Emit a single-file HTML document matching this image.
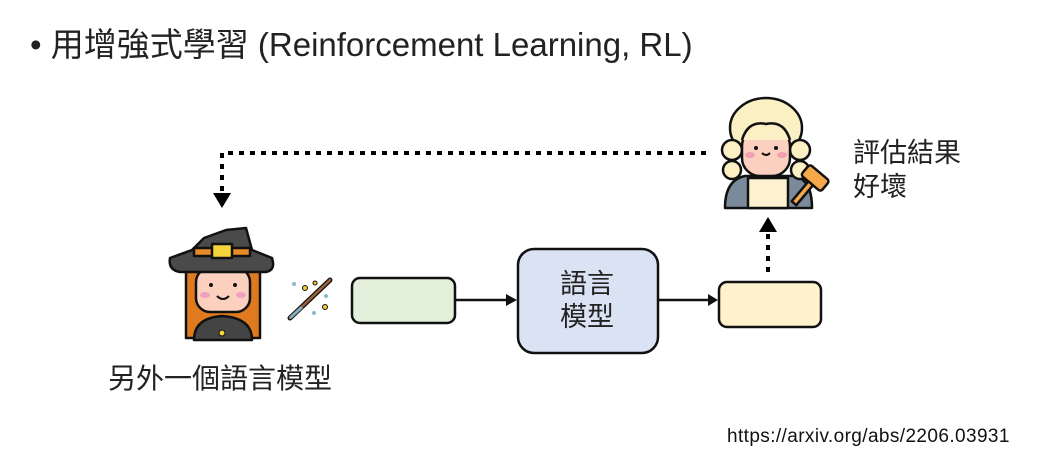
<!DOCTYPE html>
<html><head><meta charset="utf-8"><style>
body{margin:0;width:1053px;height:472px;background:#fff;position:relative;overflow:hidden;font-family:"Liberation Sans","Noto Sans CJK TC",sans-serif;color:#222}
.a{position:absolute;white-space:nowrap}
</style></head><body>
<div class="a" style="left:30px;top:25px;font-size:33px;line-height:40px;">• 用增強式學習 (Reinforcement Learning, RL)</div>
<svg class="a" style="left:0;top:0" width="1053" height="472">
<path d="M706 153 H222 V195" stroke="#000" stroke-width="4" stroke-dasharray="5 6" fill="none"/>
<polygon points="213,193 231,193 222,208" fill="#000"/>
<path d="M768 272 V232" stroke="#000" stroke-width="4" stroke-dasharray="5 6" fill="none"/>
<polygon points="759,232 777,232 768,217" fill="#000"/>
<rect x="352" y="278" width="103" height="45" rx="8" fill="#e2efda" stroke="#111" stroke-width="2.5"/>
<line x1="456" y1="300" x2="508" y2="300" stroke="#111" stroke-width="2.5"/>
<polygon points="506,294 517,300 506,306" fill="#111"/>
<rect x="518" y="249" width="140" height="104" rx="16" fill="#dae3f3" stroke="#111" stroke-width="2.5"/>
<line x1="659" y1="300" x2="710" y2="300" stroke="#111" stroke-width="2.5"/>
<polygon points="708,294 718,300 708,306" fill="#111"/>
<rect x="719" y="282" width="102" height="45" rx="8" fill="#fff2cc" stroke="#111" stroke-width="2.5"/>
<g stroke="#111" stroke-width="2.5" stroke-linejoin="round">
<rect x="186" y="262" width="74" height="76" fill="#e07a1f"/>
<path d="M194 340 Q194 318 222 316 Q252 318 252 340Z" fill="#444"/>
<rect x="196" y="268" width="54" height="44" rx="14" fill="#fbd0bf"/>
<path d="M192 250 L170 258 Q168 270 180 272 H266 Q276 270 272 258 L252 250 L246 228 L226 230 L204 238 L198 244 Z" fill="#4a4a4a"/>
<rect x="194" y="248" width="56" height="8" fill="#e88a28"/>
<rect x="212" y="244" width="20" height="14" fill="#f5d33a"/>
</g>
<ellipse cx="205" cy="295" rx="5" ry="3" fill="#f0a0c0"/><ellipse cx="241" cy="295" rx="5" ry="3" fill="#f0a0c0"/>
<circle cx="211" cy="285" r="2" fill="#111"/><circle cx="235" cy="285" r="2" fill="#111"/>
<path d="M217 296 Q223 302 229 296" stroke="#111" stroke-width="2" fill="none"/>
<circle cx="222" cy="333" r="3" fill="#f5d33a" stroke="#111"/>
<line x1="290" y1="318" x2="330" y2="280" stroke="#111" stroke-width="5" stroke-linecap="round"/>
<line x1="290" y1="318" x2="330" y2="280" stroke="#a0603a" stroke-width="2.5" stroke-linecap="round"/>
<line x1="290" y1="318" x2="302" y2="307" stroke="#8ab" stroke-width="3"/>
<g fill="#f5c932" stroke="#111" stroke-width="1"><circle cx="305" cy="288" r="2.5"/><circle cx="325" cy="307" r="2.5"/><circle cx="315" cy="283" r="2"/></g>
<g fill="#8bc"><circle cx="294" cy="284" r="2"/><circle cx="326" cy="296" r="2"/><circle cx="314" cy="313" r="2"/></g>
<g stroke="#111" stroke-width="2.5" stroke-linejoin="round">
<path d="M725 208 Q725 180 745 176 H795 Q812 180 812 208Z" fill="#7a8a9a"/>
<rect x="748" y="178" width="40" height="30" fill="#fdf1d0"/>
<ellipse cx="766" cy="128" rx="36" ry="30" fill="#fbefc4"/>
<circle cx="732" cy="150" r="10" fill="#fbefc4"/><circle cx="732" cy="170" r="9" fill="#fbefc4"/>
<circle cx="800" cy="150" r="10" fill="#fbefc4"/><circle cx="800" cy="170" r="9" fill="#fbefc4"/>
<rect x="742" y="128" width="48" height="48" rx="18" fill="#fbd0bf"/>
<path d="M742 140 Q748 120 766 124 Q784 120 790 140" fill="#fbefc4"/>
<g transform="rotate(40 808 185)"><rect x="796" y="168" width="26" height="14" rx="3" fill="#f5a84a"/><rect x="806" y="182" width="6" height="26" fill="#f5a84a"/></g>
</g>
<ellipse cx="750" cy="155" rx="5" ry="3" fill="#f0a0b0"/><ellipse cx="782" cy="155" rx="5" ry="3" fill="#f0a0b0"/>
<circle cx="756" cy="148" r="2" fill="#111"/><circle cx="776" cy="148" r="2" fill="#111"/>
<path d="M762 153 Q766 157 770 153" stroke="#111" stroke-width="2" fill="none"/>
</svg>
<div class="a" style="left:560px;top:268px;font-size:27px;line-height:33px;text-align:center;">語言<br>模型</div>
<div class="a" style="left:853px;top:136px;font-size:27px;line-height:34px;">評估結果<br>好壞</div>
<div class="a" style="left:108px;top:357px;font-size:28px;">另外一個語言模型</div>
<div class="a" style="left:727px;top:426px;font-size:19px;letter-spacing:0.4px;color:#111">https://arxiv.org/abs/2206.03931</div>
</body></html>
